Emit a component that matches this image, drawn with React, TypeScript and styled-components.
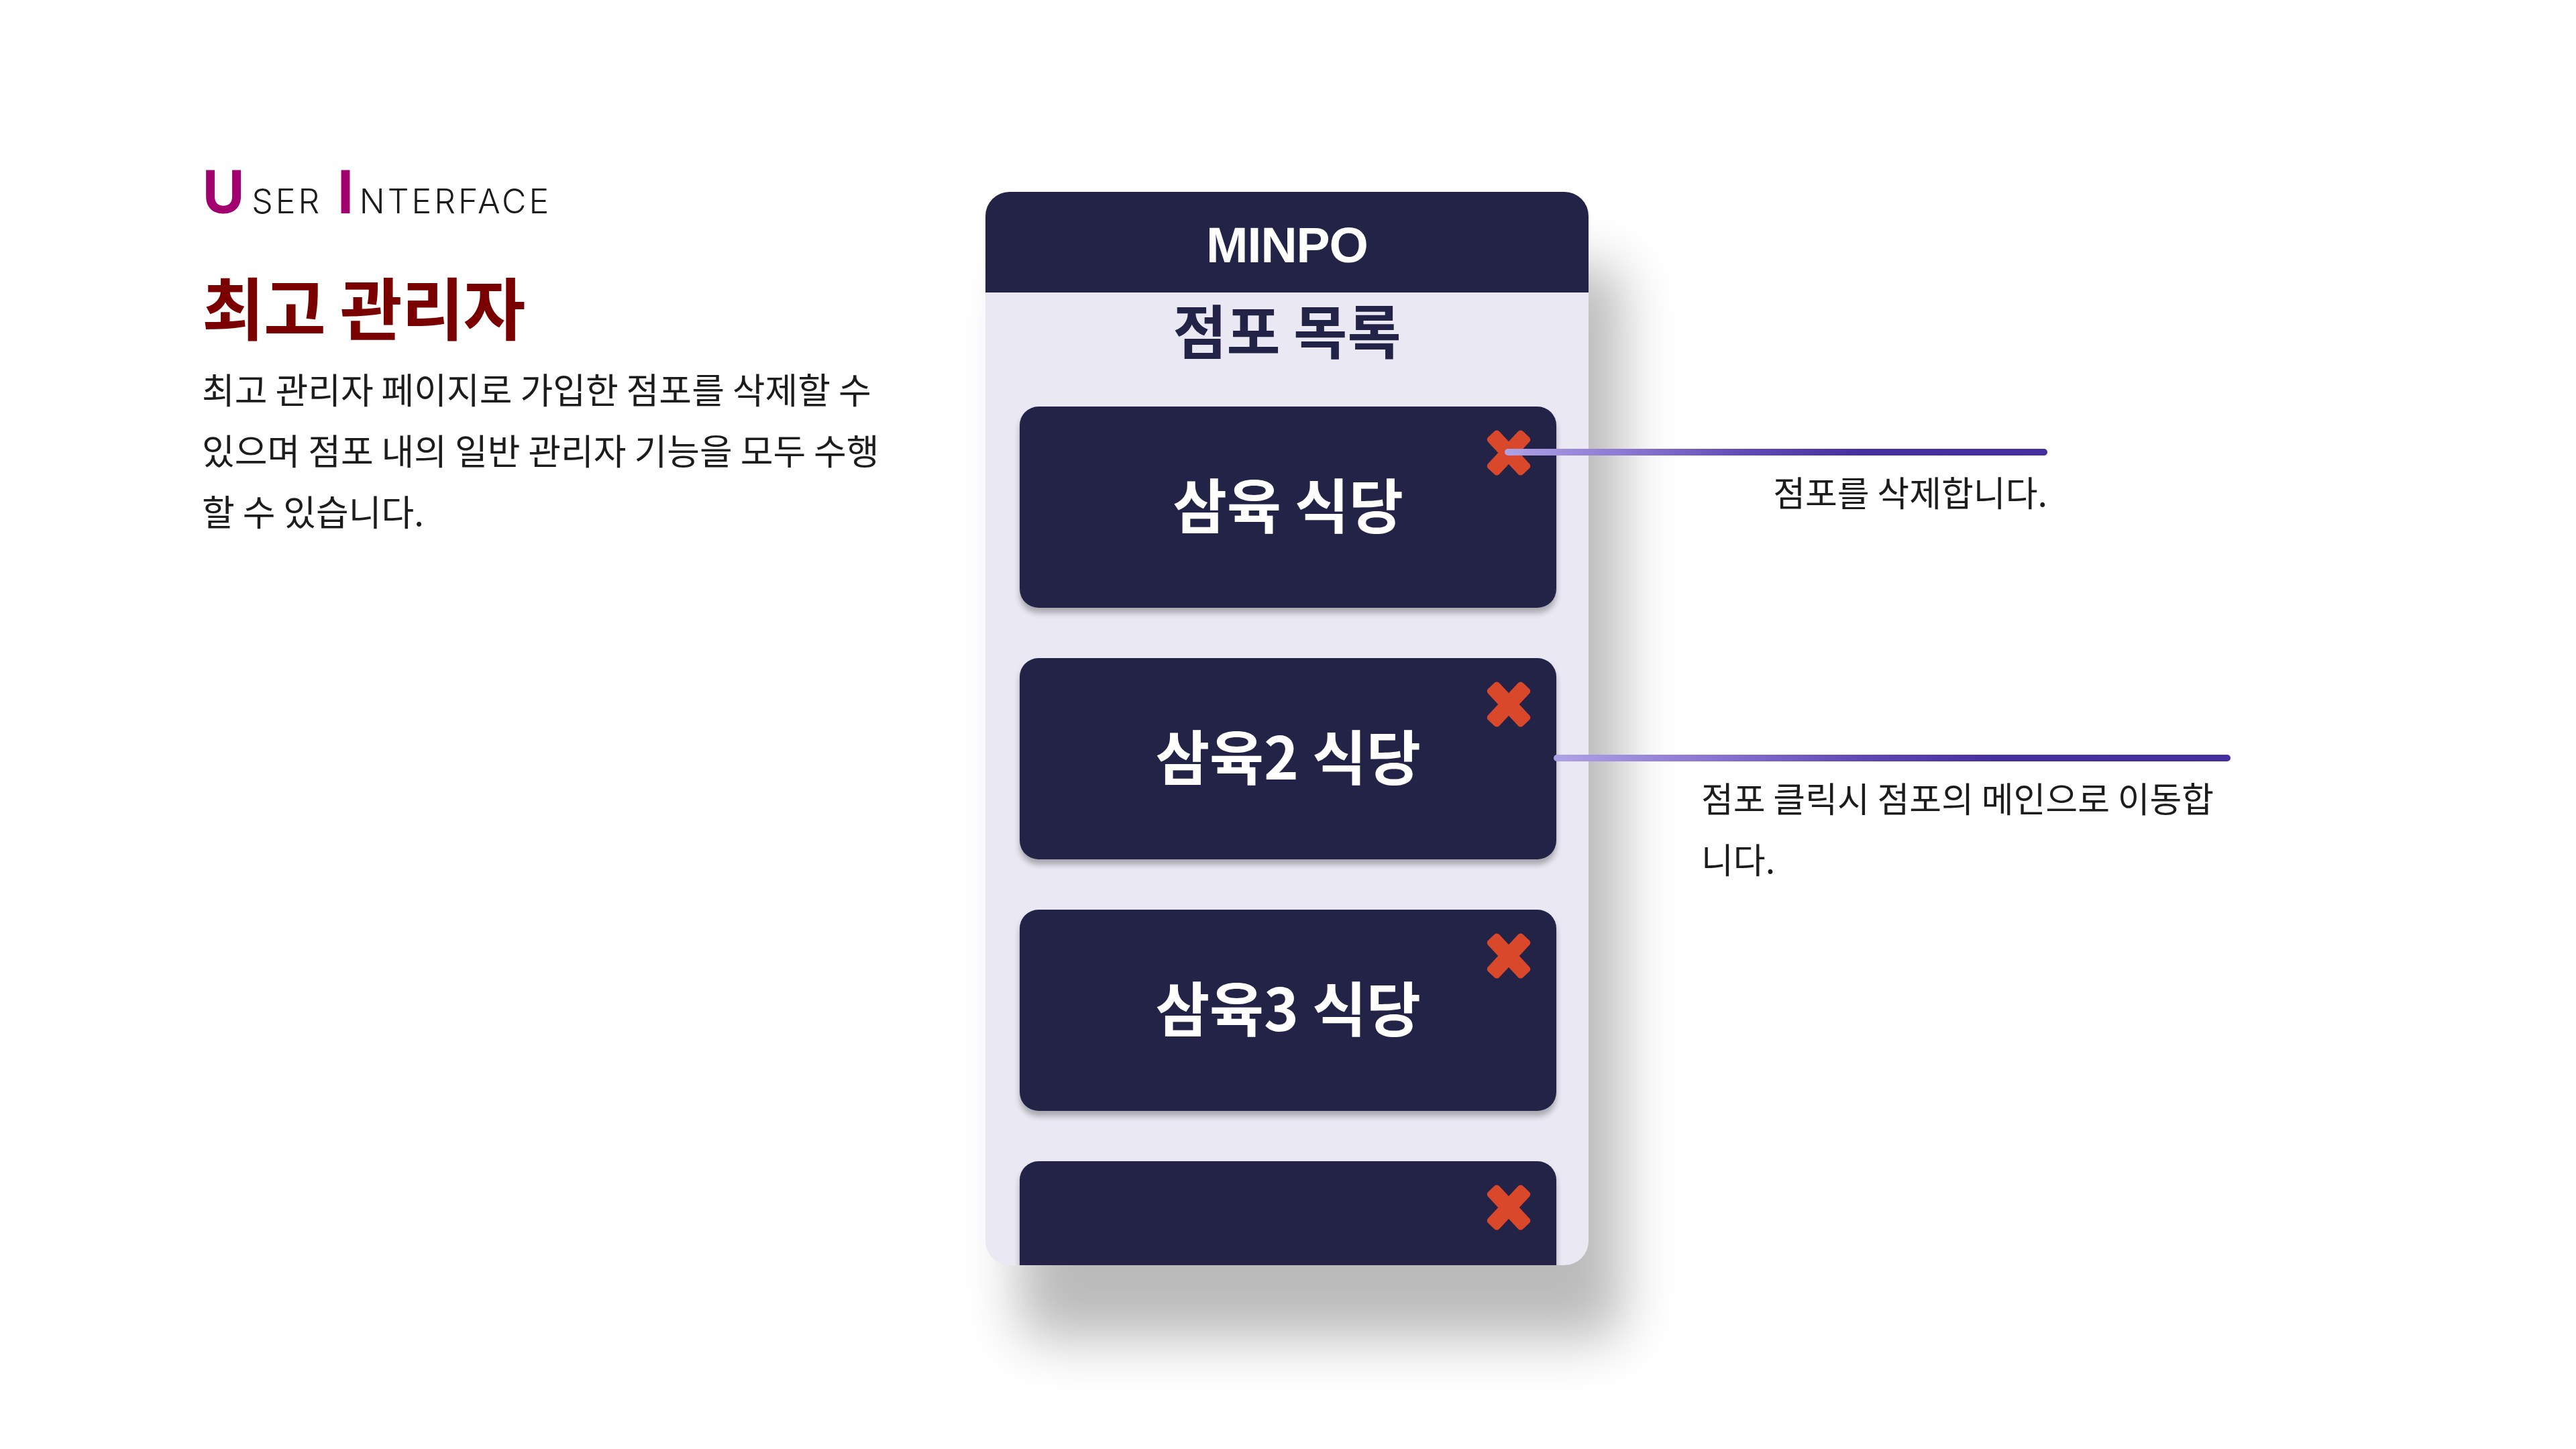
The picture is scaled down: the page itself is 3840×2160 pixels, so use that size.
import styled, { createGlobalStyle } from "styled-components";

const GlobalStyle = createGlobalStyle`
  html, body {
    margin: 0;
    padding: 0;
    background: #ffffff;
  }
  * {
    box-sizing: border-box;
  }
`;

const NAVY = "#222347";
const KR = `"Noto Sans CJK KR", "Noto Sans", sans-serif`;

const Page = styled.div`
  width: 3840px;
  height: 2160px;
  display: grid;
  grid-template-columns: 1168px 899px;
  align-items: start;
  padding: 240px 0 0 301px;
  background: #ffffff;
  overflow: hidden;
`;

const Intro = styled.section`
  display: flex;
  flex-direction: column;
`;

const Eyebrow = styled.div`
  display: flex;
  align-items: baseline;
  font-family: Inter, Lato, sans-serif;
  font-weight: 300;
  font-size: 50px;
  letter-spacing: 4px;
  color: #1b1b1b;
  line-height: 1;
`;

const Initial = styled.span<{ $gap?: number }>`
  font-family: Poppins, Inter, Lato, sans-serif;
  font-weight: 600;
  font-size: 92px;
  letter-spacing: 0;
  color: #a3006f;
  margin-right: ${(p) => p.$gap ?? 10}px;
`;

const Word = styled.span<{ $after?: number }>`
  margin-right: ${(p) => p.$after ?? 0}px;
`;

const Headline = styled.h1`
  margin: 68px 0 0;
  font-family: ${KR};
  font-weight: 700;
  font-size: 101px;
  line-height: 110px;
  color: #7a0000;
  letter-spacing: -1px;
`;

const Body = styled.p`
  margin: 24px 0 0;
  width: 1022px;
  font-family: ${KR};
  font-weight: 400;
  font-size: 53px;
  line-height: 91px;
  color: #1c1c1c;
`;

const Stage = styled.div`
  position: relative;
  margin-top: 46px;
`;

const Phone = styled.div`
  width: 899px;
  height: 1600px;
  border-radius: 36px;
  overflow: hidden;
  background: #eae8f2;
  box-shadow: 50px 110px 80px rgba(0, 0, 0, 0.27);
  display: flex;
  flex-direction: column;
`;

const PhoneHeader = styled.header`
  height: 150px;
  flex-shrink: 0;
  padding-top: 8px;
  background: ${NAVY};
  display: flex;
  align-items: center;
  justify-content: center;
  color: #ffffff;
  font-family: "Liberation Sans", Arial, sans-serif;
  font-weight: 700;
  font-size: 75px;
  letter-spacing: -1px;
`;

const ListTitle = styled.h2`
  margin: 6px 0 0;
  text-align: center;
  font-family: ${KR};
  font-weight: 700;
  font-size: 87px;
  line-height: 96px;
  color: ${NAVY};
`;

const StoreList = styled.div`
  display: flex;
  flex-direction: column;
  gap: 75px;
  padding: 68px 48px 0 51px;
`;

const StoreCard = styled.div`
  position: relative;
  flex-shrink: 0;
  height: 300px;
  padding-bottom: 16px;
  border-radius: 28px;
  background: ${NAVY};
  box-shadow: 0 8px 8px rgba(0, 0, 0, 0.28);
  display: flex;
  align-items: center;
  justify-content: center;
  color: #ffffff;
  font-family: ${KR};
  font-weight: 700;
  font-size: 88px;
`;

const DeleteMark = styled.svg`
  position: absolute;
  top: 33px;
  right: 36px;
  width: 70px;
  height: 72px;
`;

const Callout = styled.div<{ $left: number; $top: number; $width: number; $align: string }>`
  position: absolute;
  left: ${(p) => p.$left}px;
  top: ${(p) => p.$top}px;
  width: ${(p) => p.$width}px;
  display: flex;
  flex-direction: column;
  align-items: ${(p) => p.$align};
`;

const Leader = styled.div`
  width: 100%;
  height: 10px;
  border-radius: 5px;
  background: linear-gradient(
    90deg,
    #aea2e6 0%,
    #8b78d2 22%,
    #5f49b4 45%,
    #45309f 65%,
    #432f9e 100%
  );
`;

const Note = styled.p<{ $width?: number; $indent?: number }>`
  margin: 8px 0 0;
  margin-left: ${(p) => p.$indent ?? 0}px;
  width: ${(p) => (p.$width ? `${p.$width}px` : "auto")};
  font-family: ${KR};
  font-weight: 400;
  font-size: 52px;
  line-height: 91px;
  color: #1c1c1c;
`;

function CrossIcon() {
  return (
    <DeleteMark viewBox="0 0 70 72">
      <g fill="#d9482a">
        <rect x="-3" y="24.5" width="76" height="23" rx="5" transform="rotate(47 35 36)" />
        <rect x="-3" y="24.5" width="76" height="23" rx="5" transform="rotate(-47 35 36)" />
      </g>
    </DeleteMark>
  );
}

const stores = ["삼육 식당", "삼육2 식당", "삼육3 식당", ""];

export default function App() {
  return (
    <>
      <GlobalStyle />
      <Page>
        <Intro>
          <Eyebrow>
            <Initial>U</Initial>
            <Word $after={22}>SER</Word>
            <Initial $gap={8}>I</Initial>
            <Word>NTERFACE</Word>
          </Eyebrow>
          <Headline>최고 관리자</Headline>
          <Body>
            최고 관리자 페이지로 가입한 점포를 삭제할 수 있으며 점포 내의 일반 관리자
            기능을 모두 수행할 수 있습니다.
          </Body>
        </Intro>

        <Stage>
          <Phone>
            <PhoneHeader>MINPO</PhoneHeader>
            <ListTitle>점포 목록</ListTitle>
            <StoreList>
              {stores.map((name, i) => (
                <StoreCard key={i}>
                  {name}
                  <CrossIcon />
                </StoreCard>
              ))}
            </StoreList>
          </Phone>

          <Callout $left={774} $top={383} $width={809} $align="flex-end">
            <Leader />
            <Note>점포를 삭제합니다.</Note>
          </Callout>

          <Callout $left={847} $top={839} $width={1009} $align="flex-start">
            <Leader />
            <Note $width={800} $indent={220}>
              점포 클릭시 점포의 메인으로 이동합니다.
            </Note>
          </Callout>
        </Stage>
      </Page>
    </>
  );
}
